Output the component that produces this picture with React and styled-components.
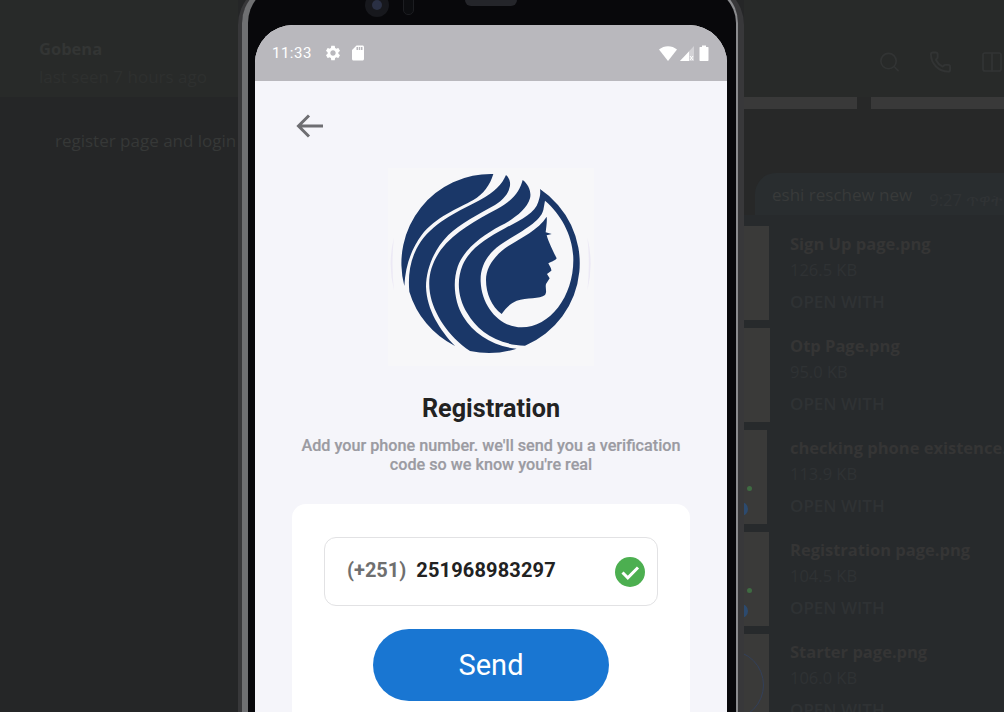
import React from 'react';
import styled, { createGlobalStyle } from 'styled-components';
import { Search, Phone, Columns2 } from 'lucide-react';
import { MdSettings, MdSdCard } from 'react-icons/md';

const GlobalStyle = createGlobalStyle`
  html, body {
    margin: 0;
    padding: 0;
    background: #252627;
  }
  * {
    box-sizing: border-box;
  }
`

//#region backdrop
const Page = styled.div`
  display: grid;
  grid-template-columns: 238px 506px 260px;
  width: 1004px;
  height: 712px;
  overflow: hidden;
  font-family: 'Open Sans', 'DejaVu Sans', sans-serif;
  font-size: 17px;
`
const LeftColumn = styled.div`
  display: flex;
  flex-direction: column;
  background: #252627;
`
const LeftHeader = styled.div`
  height: 97px;
  padding: 27px 0 0 39px;
  background: #282a29;
`
const ContactName = styled.div`
  font-size: 16.5px;
  font-weight: 700;
  line-height: 44px;
  height: 44px;
  color: #333534;
`
const LastSeen = styled.div`
  line-height: 22px;
  margin-top: -5px;
  white-space: nowrap;
  color: #2e302f;
`
const Message = styled.div`
  padding: 33px 0 0 55px;
  line-height: 22px;
  white-space: nowrap;
  color: #363837;
`
const RightColumn = styled.div`
  display: flex;
  flex-direction: column;
  background: #272828;
  overflow: hidden;
`
const RightHeader = styled.div`
  display: flex;
  align-items: center;
  gap: 28px;
  height: 97px;
  padding: 26px 0 0 134px;
  flex-shrink: 0;
  background: #282a29;
  color: #323434;
`
const BarRow = styled.div`
  display: flex;
  gap: 14px;
  flex-shrink: 0;
`
const Bar = styled.div`
  height: 12px;
  flex: ${props => props.$grow ? '1' : '0 0 113px'};
  background: #393939;
`
const Bubble = styled.div`
  display: flex;
  align-items: center;
  height: 42px;
  margin: 64px 0 0 11px;
  padding-left: 17px;
  flex-shrink: 0;
  border-radius: 21px 0 0 0;
  background: #292d2f;
  color: #383a3a;
  white-space: nowrap;
`
const BubbleTime = styled.span`
  margin: 10px 0 0 17px;
  font-size: 16.5px;
  color: #303335;
`
const FileList = styled.div`
  display: flex;
  flex-direction: column;
  gap: 8px;
  flex: 1;
  padding-top: 11px;
  background: #272a2c;
`
const FileRow = styled.div`
  display: flex;
  height: 94px;
  flex-shrink: 0;
`
const Thumb = styled.div`
  position: relative;
  width: ${props => props.$width}px;
  flex-shrink: 0;
  overflow: hidden;
  background: #3a3a39;
`
const ThumbDot = styled.span`
  position: absolute;
  left: ${props => props.$x}px;
  top: ${props => props.$y}px;
  width: ${props => props.$size}px;
  height: ${props => props.$size}px;
  border-radius: 50%;
  background: ${props => props.$color};
`
const ThumbRing = styled.span`
  position: absolute;
  left: -50px;
  top: 16px;
  width: 70px;
  height: 70px;
  border-radius: 50%;
  border: 1px solid #33405a;
`
const FileText = styled.div`
  display: flex;
  flex-direction: column;
  padding: 7px 0 0 21px;
  margin-left: ${props => 25 - props.$thumb}px;
  white-space: nowrap;
  line-height: 22px;
`
const FileName = styled.div`
  font-size: 16.5px;
  font-weight: 700;
  color: #353535;
`
const FileSize = styled.div`
  margin-top: 4px;
  font-size: 16.5px;
  color: #2f3234;
`
const FileAction = styled.div`
  margin-top: 10px;
  font-weight: 600;
  color: #2f3234;
`
//#endregion

//#region phone frame
const PhoneShell = styled.div`
  height: 760px;
  margin-top: -18px;
  border-style: solid;
  border-color: #3c3c3d #38383a;
  border-width: 2px 6px 0 4px;
  border-radius: 43px 43px 0 0;
  background: #1c1d1e;
`
const PhoneRim = styled.div`
  height: 100%;
  border-style: solid;
  border-color: #8a8b8e #8a8b8e #8a8b8e #6f7072;
  border-width: 3px 2px 0 6px;
  border-radius: 39px 39px 0 0;
  padding: 0 9px 0 7px;
  background: #08080b;
`
const TopBezel = styled.div`
  display: flex;
  align-items: flex-start;
  height: 38px;
  padding-left: 110px;
`
const Camera = styled.div`
  display: flex;
  align-items: center;
  justify-content: center;
  width: 24px;
  height: 24px;
  margin-top: 6px;
  border-radius: 50%;
  background: #17181d;
`
const Lens = styled.div`
  width: 10px;
  height: 10px;
  border-radius: 50%;
  background: #2a3044;
`
const Sensor = styled.div`
  width: 11px;
  height: 25px;
  margin: 3px 0 0 14px;
  border-radius: 5px;
  background: #0c0d10;
  border: 1px solid #1c1d21;
`
const Speaker = styled.div`
  width: 52px;
  height: 16px;
  margin: 3px 0 0 51px;
  border-radius: 6px;
  background: #24252a;
`
const Screen = styled.div`
  height: 720px;
  border-radius: 38px 38px 0 0;
  overflow: hidden;
  background: #f5f5fa;
  font-family: Roboto, 'Liberation Sans', sans-serif;
`
//#endregion

//#region status bar
const StatusBar = styled.div`
  display: flex;
  align-items: center;
  height: 56px;
  padding: 0 17px;
  background: #b9b8bd;
  color: #ffffff;
`
const StatusTime = styled.span`
  font-size: 15px;
  letter-spacing: 0.5px;
  margin-right: 12px;
`
const StatusIcons = styled.div`
  display: flex;
  align-items: center;
  gap: ${props => props.$gap}px;
  margin-left: ${props => props.$push ? 'auto' : '0'};
`
//#endregion

//#region registration
const BackRow = styled.div`
  display: flex;
  height: 87px;
  padding: 33px 0 0 41px;
`
const LogoBox = styled.svg`
  display: block;
  width: 206px;
  height: 198px;
  margin: 0 auto;
  background: #f7f7f9;
`
const Title = styled.h1`
  margin: 28px 0 0;
  font-size: 25.2px;
  line-height: 30px;
  font-weight: 700;
  text-align: center;
  color: #222222;
`
const Subtitle = styled.p`
  width: 400px;
  margin: 12px auto 0;
  font-size: 16.2px;
  line-height: 19px;
  font-weight: 500;
  text-align: center;
  color: #9b9ba2;
  -webkit-text-stroke: 0.2px #9b9ba2;
`
const Card = styled.div`
  display: flex;
  flex-direction: column;
  align-items: center;
  width: 398px;
  height: 260px;
  margin: 30px auto 0;
  padding-top: 33px;
  border-radius: 14px;
  background: #ffffff;
`
const PhoneField = styled.div`
  display: flex;
  align-items: center;
  width: 334px;
  height: 69px;
  padding: 0 12px 0 22px;
  border: 1px solid #e2e2e4;
  border-radius: 12px;
  font-size: 20px;
  font-weight: 700;
`
const DialCode = styled.span`
  color: #6f6f6f;
  margin: 0 10px 4px 0;
`
const PhoneNumber = styled.span`
  margin-bottom: 4px;
  letter-spacing: 0.15px;
  color: #222222;
`
const CheckBadge = styled.svg`
  width: 30px;
  height: 30px;
  margin-left: auto;
`
const SendButton = styled.button`
  width: 236px;
  height: 72px;
  margin-top: 23px;
  border: none;
  border-radius: 36px;
  background: #1976d2;
  color: #ffffff;
  font-family: Roboto, 'Liberation Sans', sans-serif;
  font-size: 29px;
`
//#endregion

const files = [
  { name: 'Sign Up page.png', size: '126.5 KB', thumb: 25 },
  { name: 'Otp Page.png', size: '95.0 KB', thumb: 26 },
  { name: 'checking phone existence.png', size: '113.9 KB', thumb: 23, dots: true },
  { name: 'Registration page.png', size: '104.5 KB', thumb: 25, dots: true },
  { name: 'Starter page.png', size: '106.0 KB', thumb: 25, ring: true },
];

const Logo = () => (
  <LogoBox viewBox="24 24 618 594">
    <path d="M42 232 Q22 312 42 392 Q33 312 42 232 Z M622 232 Q642 312 622 392 Q631 312 622 232 Z" fill="#ece9f5" />
    <g fill="#1a3768">
      <path d="M340 42 A268 268 0 0 0 73 378 C76 320 92 270 125 225 C165 172 235 145 280 120 C310 103 330 75 340 42 Z" />
      <path d="M378 45 C365 75 345 95 300 120 C240 152 170 180 122 245 C92 290 83 340 88 395 A268 268 0 0 0 225 558 C180 510 140 450 138 380 C138 330 160 270 205 225 C235 195 300 160 345 135 C370 120 385 100 388 85 C393 72 390 55 378 45 Z" />
      <path d="M428 60 C420 90 405 118 350 148 C290 180 225 215 182 270 C155 310 142 350 150 400 C160 460 205 530 270 573 A268 268 0 0 0 410 566 C340 560 280 520 250 470 C225 430 216 370 233 320 C253 265 310 225 360 198 C400 178 440 150 450 115 C455 95 445 72 428 60 Z" />
      <path fillRule="evenodd" d="M480 87 A268 268 0 0 1 435 557 C350 555 290 510 262 460 C235 415 228 365 248 315 C270 265 320 235 375 205 C420 180 465 160 475 125 C480 110 482 100 480 87 Z M495 122 C545 165 580 230 580 300 C580 410 510 502 425 502 C360 502 305 440 302 365 C300 320 320 285 360 255 C410 220 480 190 490 150 Z" />
      <path d="M500 170 C502 185 498 205 497 217 L515 222 L500 226 C505 245 520 275 530 295 C525 303 512 305 505 310 C508 318 515 325 514 332 L501 342 L509 355 L498 372 C495 385 502 395 495 405 C480 418 440 412 410 422 C390 430 375 448 365 462 C335 440 318 400 318 360 C318 320 345 285 385 258 C425 232 475 210 500 170 Z" />
    </g>
  </LogoBox>
);

const App = () => {
  return (
    <Page>
      <GlobalStyle />

      <LeftColumn>
        <LeftHeader>
          <ContactName>Gobena</ContactName>
          <LastSeen>last seen 7 hours ago</LastSeen>
        </LeftHeader>
        <Message>register page and login</Message>
      </LeftColumn>

      <PhoneShell>
        <PhoneRim>
          <TopBezel>
            <Camera><Lens /></Camera>
            <Sensor />
            <Speaker />
          </TopBezel>
          <Screen>
            <StatusBar>
              <StatusTime>11:33</StatusTime>
              <StatusIcons $gap={7}>
                <MdSettings size={18} />
                <MdSdCard size={18} />
              </StatusIcons>
              <StatusIcons $gap={3} $push>
                <svg width="18" height="15" viewBox="0 0 18 15">
                  <path d="M0 3.5 C5 -1 13 -1 18 3.5 L9 15 Z" fill="#ffffff" />
                </svg>
                <svg width="15" height="15" viewBox="0 0 15 15">
                  <path d="M14 0 V15 H0 Z" fill="#d3d2d6" />
                  <path d="M9 5.5 V15 H0 Z" fill="#ffffff" />
                  <path d="M10 10 L13 14 M13 10 L10 14" stroke="#ffffff" strokeWidth="1" />
                </svg>
                <svg width="12" height="16" viewBox="0 0 12 16">
                  <path d="M1.5 2.5 Q1.5 2 2 2 H4 V0.5 H8 V2 H10 Q10.5 2 10.5 2.5 V15 Q10.5 16 10 16 H2 Q1.5 16 1.5 15 Z" fill="#ffffff" />
                </svg>
              </StatusIcons>
            </StatusBar>

            <BackRow>
              <svg width="28" height="24" viewBox="0 0 28 24">
                <path d="M27 12 H3 M13 1.5 L2.5 12 L13 22.5" fill="none" stroke="#6e6e72" strokeWidth="3" />
              </svg>
            </BackRow>

            <Logo />

            <Title>Registration</Title>
            <Subtitle>Add your phone number. we'll send you a verification code so we know you're real</Subtitle>

            <Card>
              <PhoneField>
                <DialCode>(+251)</DialCode>
                <PhoneNumber>251968983297</PhoneNumber>
                <CheckBadge viewBox="0 0 30 30">
                  <circle cx="15" cy="15" r="15" fill="#4caf50" />
                  <path d="M7.5 15.5 L12.8 20.8 L23 10.5" fill="none" stroke="#ffffff" strokeWidth="3" />
                </CheckBadge>
              </PhoneField>
              <SendButton>Send</SendButton>
            </Card>
          </Screen>
        </PhoneRim>
      </PhoneShell>

      <RightColumn>
        <RightHeader>
          <Search size={24} strokeWidth={1.7} />
          <Phone size={24} strokeWidth={2} />
          <Columns2 size={24} strokeWidth={1.7} style={{ flexShrink: 0 }} />
        </RightHeader>
        <BarRow>
          <Bar />
          <Bar $grow />
        </BarRow>
        <Bubble>
          eshi reschew new
          <BubbleTime>9:27 ጥዋት</BubbleTime>
        </Bubble>
        <FileList>
          {files.map(file => (
            <FileRow key={file.name}>
              <Thumb $width={file.thumb}>
                {file.dots && <ThumbDot $x={3} $y={56} $size={5} $color="#3f6b42" />}
                {file.dots && <ThumbDot $x={-10} $y={72} $size={14} $color="#2c4a6e" />}
                {file.ring && <ThumbRing />}
              </Thumb>
              <FileText $thumb={file.thumb}>
                <FileName>{file.name}</FileName>
                <FileSize>{file.size}</FileSize>
                <FileAction>OPEN WITH</FileAction>
              </FileText>
            </FileRow>
          ))}
        </FileList>
      </RightColumn>
    </Page>
  );
}

export default App;
